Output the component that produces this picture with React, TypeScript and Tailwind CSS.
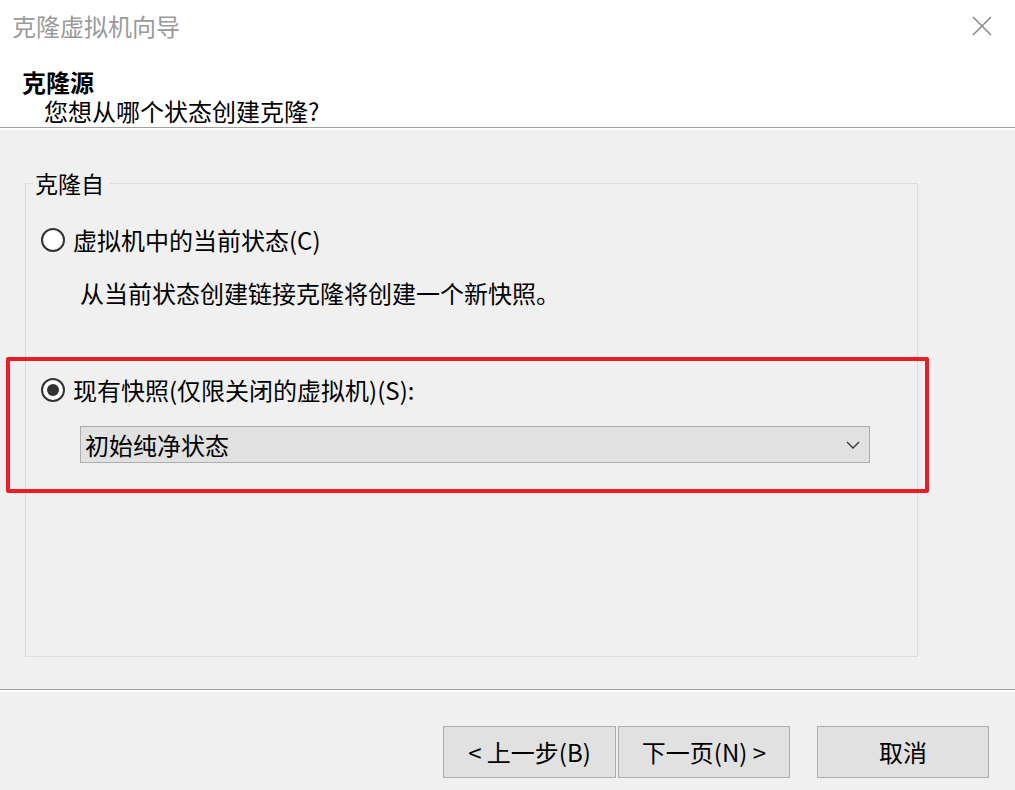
const FONT = "font-['Microsoft_YaHei','Noto_Sans_CJK_SC',sans-serif]";

function Radio({ checked }: { checked?: boolean }) {
  return (
    <span className="flex h-[24px] w-[24px] shrink-0 items-center justify-center rounded-full border-2 border-[#333333] bg-white">
      {checked && <span className="h-[12px] w-[12px] rounded-full bg-[#333333]" />}
    </span>
  );
}

function Button({ children, className = "" }: { children: React.ReactNode; className?: string }) {
  return (
    <button
      className={`flex h-[52px] items-center justify-center border border-[#adadad] bg-[#e1e1e1] text-[24px] text-black ${className}`}
    >
      {children}
    </button>
  );
}

export default function App() {
  return (
    <div className={`relative flex h-[790px] w-[1015px] flex-col overflow-hidden bg-[#f0f0f0] text-black ${FONT}`}>
      {/* header */}
      <div className="h-[127px] bg-white">
        <div className="flex h-[52px] items-center justify-between pl-[12px] pr-[23px]">
          <span className="text-[24px] text-[#9a9a9a]">克隆虚拟机向导</span>
          <svg width="20" height="20" viewBox="0 0 20 20" className="text-[#8a8a8a]">
            <path d="M1 1L19 19M19 1L1 19" stroke="currentColor" strokeWidth="1.6" fill="none" />
          </svg>
        </div>
        <div className="mt-[16px] pl-[22px] text-[24px] font-bold leading-[28px]">克隆源</div>
        <div className="mt-[1px] pl-[44px] text-[24px] leading-[28px]">您想从哪个状态创建克隆?</div>
      </div>
      <div className="h-px bg-[#a0a0a0]" />
      <div className="h-[2px] bg-white" />

      {/* group */}
      <fieldset className="ml-[25px] mt-[40px] h-[487px] w-[893px] border border-[#dcdcdc]">
        <legend className="ml-[7px] pl-[2px] pr-[6px] text-[23px] leading-[26px]">克隆自</legend>
        <div className="ml-[15px] mt-[29px] flex h-[30px] items-center gap-[8px] text-[24px]">
          <Radio />
          <span>虚拟机中的当前状态(C)</span>
        </div>
        <div className="ml-[54px] mt-[23px] text-[24px] leading-[30px]">从当前状态创建链接克隆将创建一个新快照。</div>
        <div className="ml-[15px] mt-[67px] flex h-[30px] items-center gap-[8px] text-[24px]">
          <Radio checked />
          <span>现有快照(仅限关闭的虚拟机)(S):</span>
        </div>
        <div className="ml-[54px] mt-[21px] flex h-[37px] w-[790px] items-center justify-between border border-[#adadad] bg-[#e1e1e1] pl-[4px] pr-[9px]">
          <span className="text-[24px]">初始纯净状态</span>
          <svg width="14" height="8" viewBox="0 0 14 8">
            <path d="M1 1L7 7L13 1" stroke="#333" strokeWidth="1.3" fill="none" />
          </svg>
        </div>
      </fieldset>

      <div className="mt-[32px] h-px bg-[#a0a0a0]" />
      <div className="h-[2px] bg-white" />

      {/* buttons */}
      <div className="mr-[26px] mt-[34px] flex justify-end">
        <Button className="w-[173px]">&lt; 上一步(B)</Button>
        <Button className="ml-[2px] w-[172px]">下一页(N) &gt;</Button>
        <Button className="ml-[27px] w-[172px]">取消</Button>
      </div>

      {/* red annotation box */}
      <div className="absolute left-[6px] top-[357px] h-[136px] w-[923px] rounded-[2px] border-4 border-[#ee1c25]" />
    </div>
  );
}
